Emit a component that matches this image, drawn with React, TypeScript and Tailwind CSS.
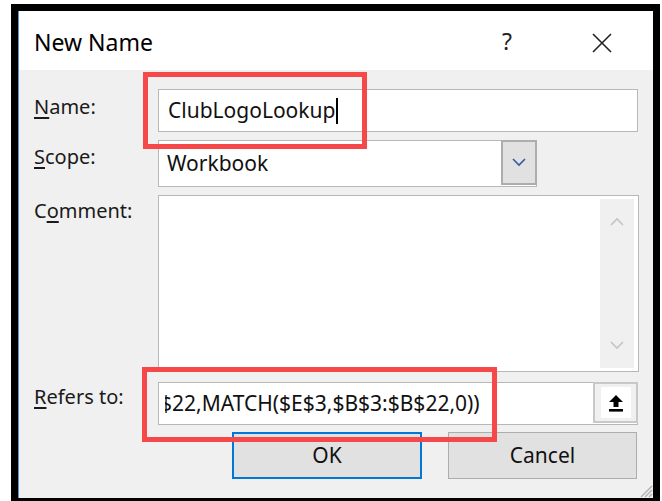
import React from "react";

const font = { fontFamily: '"Noto Sans", "Open Sans", sans-serif' };

function Label({ children, pt }: { children: React.ReactNode; pt: string }) {
  return (
    <div className={`w-[139px] shrink-0 pl-[15px] text-[20px] leading-[26px] text-[#1a1a1a] ${pt}`}>{children}</div>
  );
}

function Chevron({ up, className }: { up?: boolean; className?: string }) {
  return (
    <svg width="14" height="9" viewBox="0 0 14 9" className={className}>
      <path d={up ? "M1 8 L7 2 L13 8" : "M1 1 L7 7 L13 1"} fill="none" stroke="currentColor" strokeWidth="1.6" />
    </svg>
  );
}

export default function App() {
  return (
    <div className="w-[662px] h-[501px] bg-white overflow-hidden pl-[11px] pt-[4px]" style={font}>
      <div className="w-[649px] h-[497px] border-black border-l-[7px] border-t-[7px] border-r-[7px] border-b-[3px] flex flex-col relative">
        <div className="flex-1 flex flex-col border-l border-[#5b8fd6]">
          {/* title bar */}
          <div className="h-[59px] bg-white flex items-center pl-[15px] shrink-0">
            <div className="text-[23px] text-black flex-1 pt-[4px]">New Name</div>
            <div className="text-[23px] text-[#222] w-[20px] mr-[69px] pt-[2px]">?</div>
            <svg width="22" height="22" viewBox="0 0 22 22" className="mr-[40px] mt-[4px]">
              <path d="M2 2 L20 20 M20 2 L2 20" stroke="#222" strokeWidth="1.6" />
            </svg>
          </div>
          {/* body */}
          <div className="flex-1 bg-[#f0f0f0] relative pt-[19px] pr-[15px]">
            <div className="flex items-start h-[43px]">
              <Label pt="pt-[5px]">
                <span className="underline underline-offset-[3px]">N</span>ame:
              </Label>
              <div className="flex-1 h-full bg-white border border-[#b8b8b8] flex items-center pl-[9px] text-[21px] text-[#111]">
                ClubLogoLookup<span className="inline-block w-[1.5px] h-[26px] bg-black ml-[1px]" />
              </div>
            </div>
            <div className="flex items-start h-[47px] mt-[8px]">
              <Label pt="pt-[4px]">
                <span className="underline underline-offset-[3px]">S</span>cope:
              </Label>
              <div className="w-[379px] h-full bg-white border border-[#b8b8b8] flex">
                <div className="flex-1 flex items-center pl-[8px] text-[21px] text-[#111]">Workbook</div>
                <div className="w-[36px] h-full bg-[#e1e1e1] border-[2px] border-[#adadad] -my-px -mr-px flex items-center justify-center text-[#3a5a9c]">
                  <Chevron />
                </div>
              </div>
            </div>
            <div className="flex items-start h-[177px] mt-[8px]">
              <Label pt="pt-[3px]">
                C<span className="underline underline-offset-[3px]">o</span>mment:
              </Label>
              <div className="flex-1 h-full bg-white border border-[#b8b8b8] flex justify-end pr-[4px] py-[3px] mr-[-1px]">
                <div className="w-[34px] h-full bg-[#f0f0f0] flex flex-col items-center justify-between py-[18px] text-[#c4c4c4]">
                  <Chevron up />
                  <Chevron />
                </div>
              </div>
            </div>
            <div className="flex items-start h-[43px] mt-[10px]">
              <Label pt="pt-[2px]">
                <span className="underline underline-offset-[3px]">R</span>efers to:
              </Label>
              <div className="flex-1 h-full bg-white border border-[#b8b8b8] flex pl-[6px]">
                {/* formula field, scrolled so its start sits off to the left */}
                <div className="flex-1 overflow-hidden flex items-center text-[21px] text-[#111] whitespace-nowrap">
                  <span className="ml-[-5px]">$22,MATCH($E$3,$B$3:$B$22,0))</span>
                </div>
                <div className="w-[45px] h-full bg-[#f0f0f0] border-[2px] border-[#c8c8c8] -my-px -mr-px flex items-center justify-center">
                  <div className="w-[30px] h-[31px] bg-white flex items-center justify-center">
                    <svg width="16" height="18" viewBox="0 0 16 18">
                      <path d="M8 1 L15 8 L10.5 8 L10.5 13 L5.5 13 L5.5 8 L1 8 Z" fill="#000" />
                      <rect x="1" y="15" width="14" height="2.6" fill="#000" />
                    </svg>
                  </div>
                </div>
              </div>
            </div>
            <div className="flex h-[47px] mt-[7px]">
              <div className="w-[213px] shrink-0" />
              <div className="w-[190px] h-full bg-[#e1e1e1] border-[2px] border-[#0078d7] flex items-center justify-center text-[21px] text-[#111]">
                OK
              </div>
              <div className="w-[26px] shrink-0" />
              <div className="w-[189px] h-full bg-[#e1e1e1] border border-[#adadad] flex items-center justify-center text-[21px] text-[#111]">
                Cancel
              </div>
            </div>
            {/* resize grip */}
            <svg width="14" height="14" viewBox="0 0 14 14" className="absolute right-0 bottom-0">
              <path d="M13 2 L2 13 M13 6 L6 13 M13 10 L10 13" stroke="#b4b4b4" strokeWidth="1.5" />
            </svg>
          </div>
        </div>
        {/* red highlight frames */}
        <div className="absolute left-[125px] top-[61px] w-[224px] h-[77px] border-[5px] border-[#f64848]" />
        <div className="absolute left-[124px] top-[356px] w-[355px] h-[75px] border-[5px] border-[#f64848]" />
      </div>
    </div>
  );
}
